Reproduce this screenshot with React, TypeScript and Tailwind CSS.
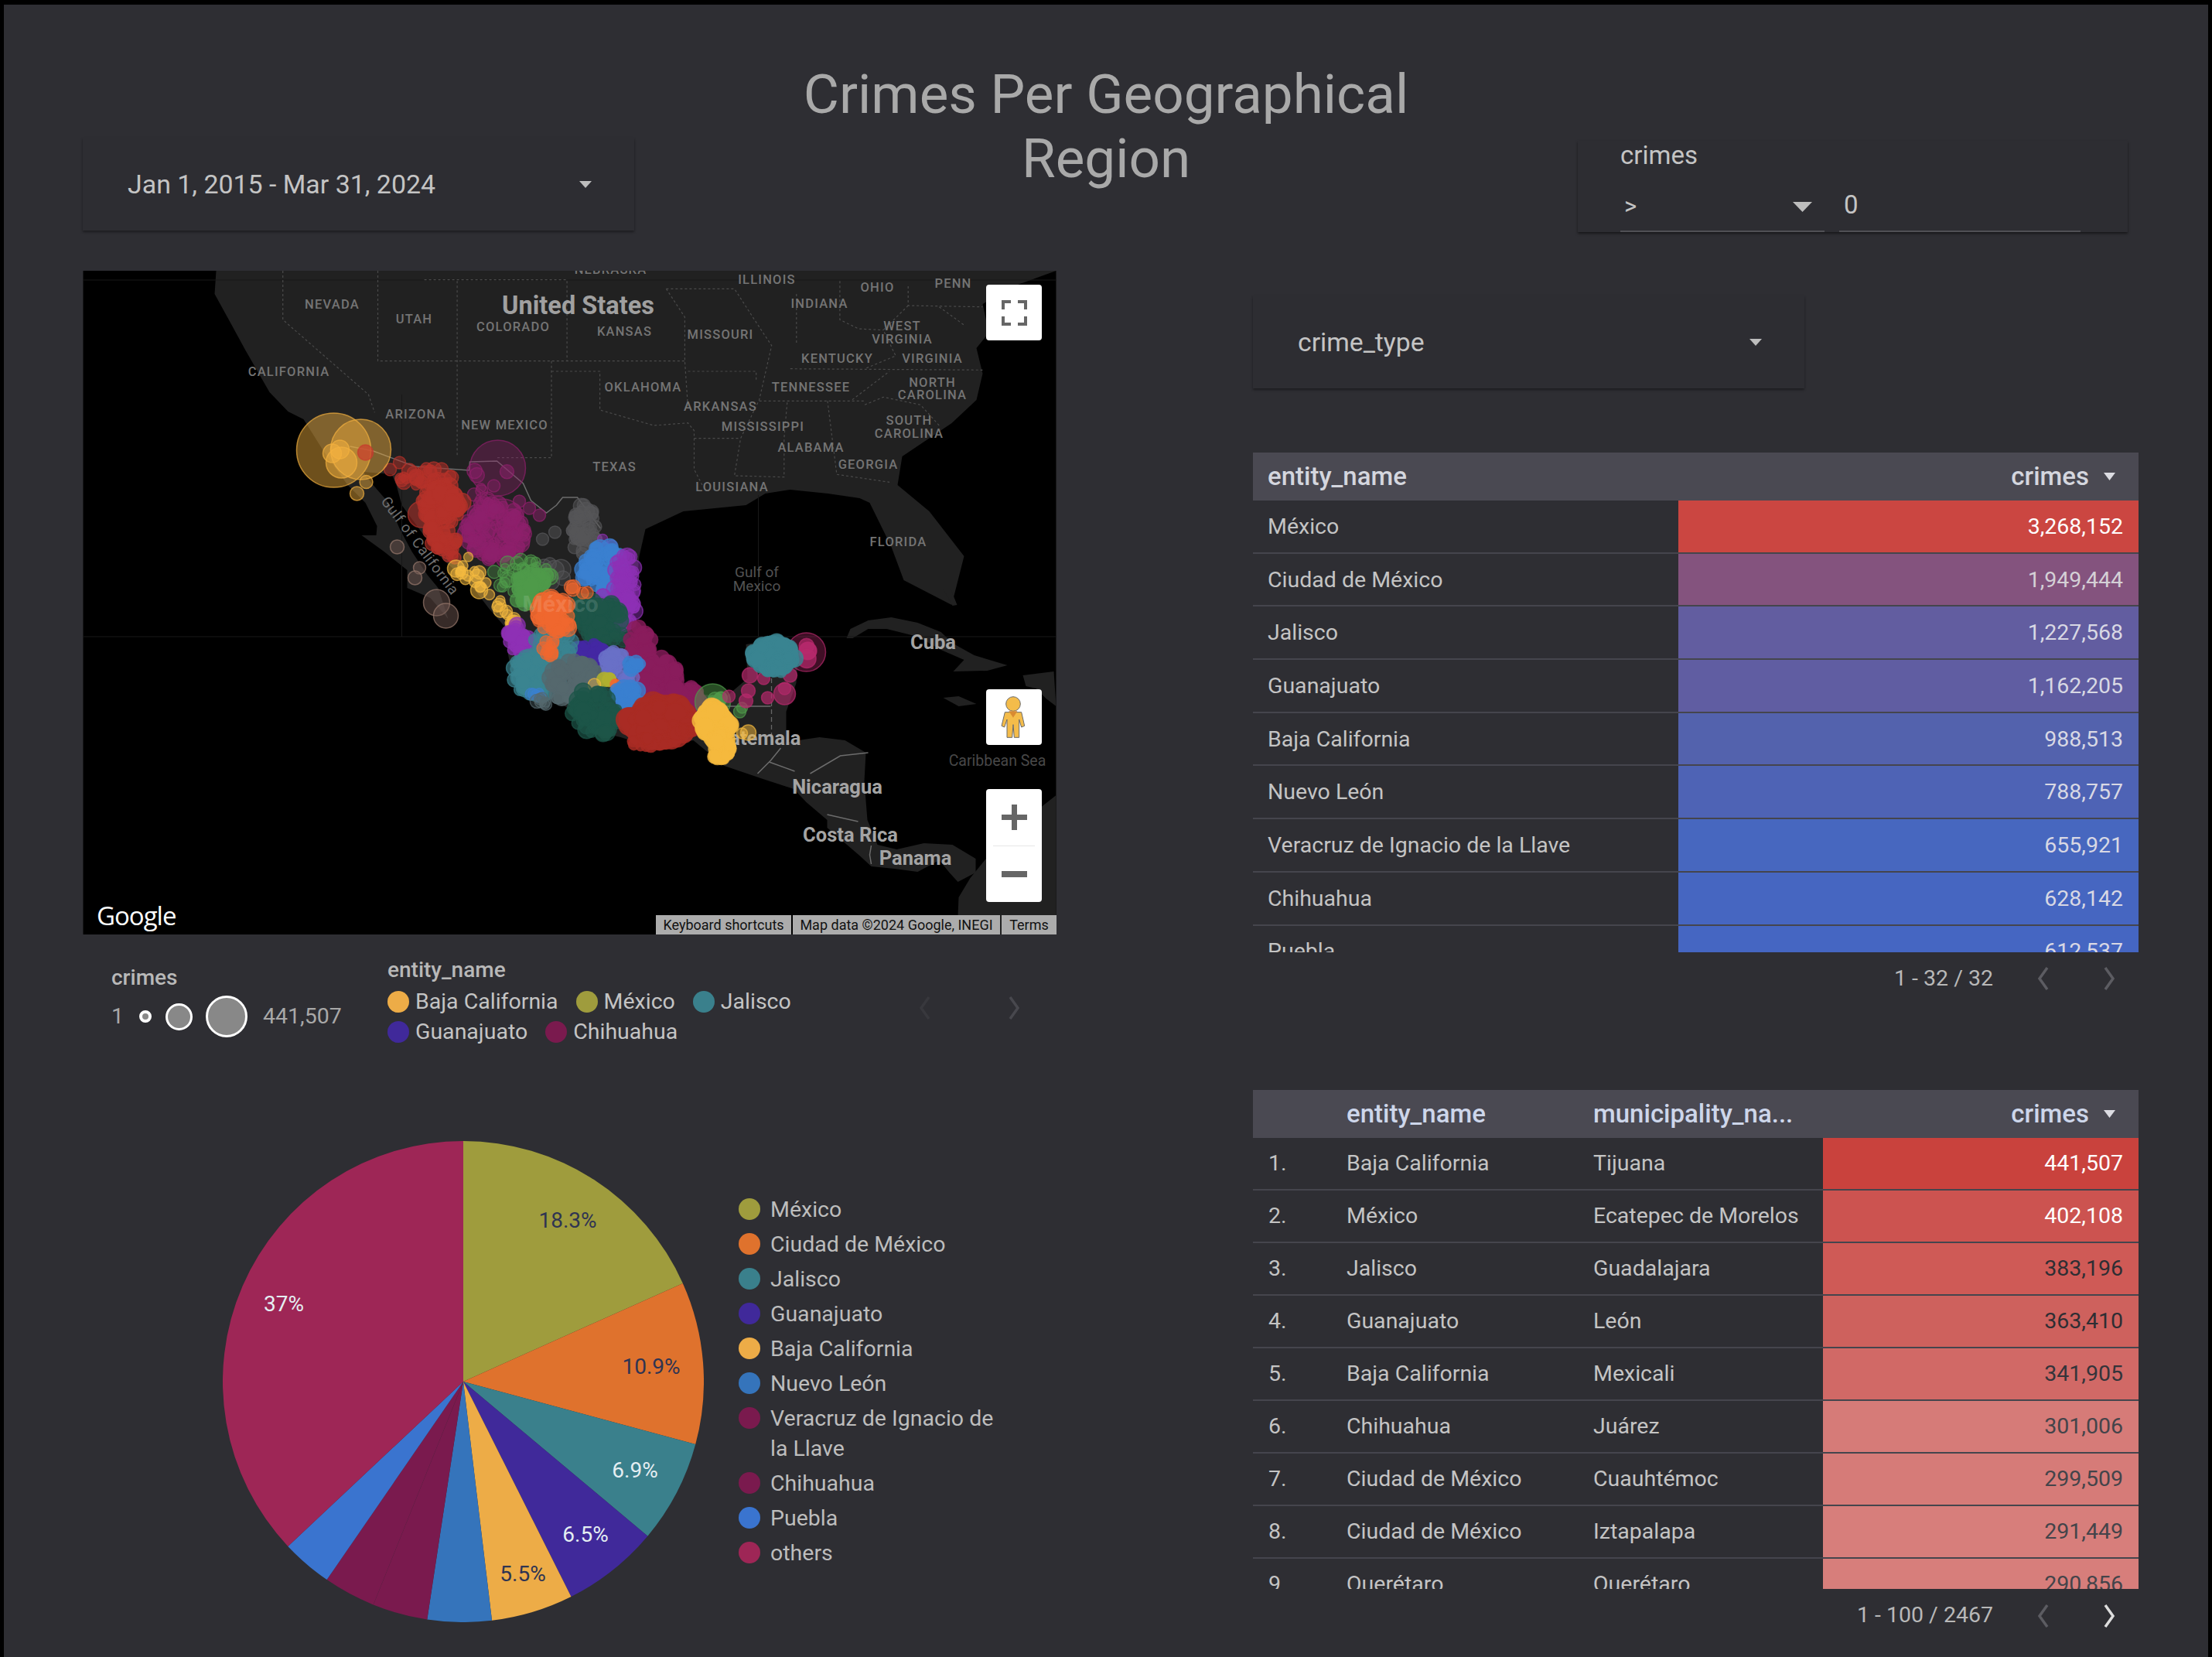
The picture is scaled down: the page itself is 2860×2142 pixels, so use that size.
import React from "react";

const z12 = (p: number[]): string => {
  const o: string[] = [];
  for (let i = 0; i < p.length; i += 2) o.push(`${(108 + 0.802 * p[i]).toFixed(1)},${(350 + p[i + 1] / 3).toFixed(1)}`);
  return o.join(" ");
};
const pts = (p: number[]): string => {
  const o: string[] = [];
  for (let i = 0; i < p.length; i += 2) o.push(`${p[i]},${p[i + 1]}`);
  return o.join(" ");
};

const LAND = [
  280,350, 278,380, 300,420, 318,453, 349,507, 373,532, 393,542, 420,585, 450,627, 473,650, 488,680, 487,692, 468,692, 497,713, 527,737, 527,760, 557,773, 580,800,
  567,760, 553,743, 533,713, 517,683, 503,650, 483,627, 470,610, 507,613, 513,627, 520,653, 547,690, 573,723, 610,757, 633,787, 653,810, 657,843, 660,860, 677,887,
  727,910, 777,947, 803,953, 847,967, 897,957, 937,990, 987,1007, 1027,1020, 1043,1037, 1070,1060, 1070,1070, 1113,1107, 1127,1120, 1157,1123, 1187,1127, 1215,1112, 1228,1128,
  1239,1140, 1262,1128, 1262,1110, 1232,1092, 1195,1090, 1160,1098, 1135,1092, 1122,1060, 1118,1010, 1120,973, 1110,967, 1093,957, 1060,953, 1033,957, 1017,960, 1017,920,
  1030,883, 1033,837, 1000,827, 965,833, 967,877, 940,900, 897,897, 860,877, 837,850, 827,823, 820,793, 827,719, 835,684, 884,661, 965,653, 990,638, 1022,633, 1071,638,
  1112,644, 1125,650, 1153,707, 1169,750, 1231,782, 1247,719, 1202,661, 1161,627, 1167,590, 1231,547, 1263,517, 1271,483, 1263,450, 1279,430, 1271,393, 1311,370, 1366,350,
];
const SOUTH = [1366,1028, 1347,1043, 1310,1056, 1290,1092, 1255,1135, 1240,1160, 1238,1208, 1366,1208];
const CUBA = [1095,825, 1100,813, 1123,802, 1153,798, 1187,805, 1217,817, 1233,832, 1260,847, 1303,860, 1277,867, 1233,868, 1247,853, 1217,840, 1187,823, 1147,813, 1123,813, 1103,825];
const JAMAICA = [1220,902, 1240,900, 1263,910, 1240,913];
const HISP = [1323,873, 1363,868, 1366,913, 1353,903, 1340,890, 1327,887];
const BAHAMA = [1220,762, 1230,762, 1238,782, 1232,783, 1225,770];

const DASHED: number[][] = [
  [322,0,322,190,460,480,470,550],
  [475,0,475,350,970,350],
  [603,40,603,720],
  [550,35,780,35,780,350],
  [755,350,755,725,665,725],
  [755,390,833,390,833,540,920,600,975,590,985,620,985,770,1000,840],
  [940,70,970,180,970,350,975,530],
  [975,390,1085,390,1085,430],
  [940,70,1050,70,1085,200,1110,290,1090,500,1060,650,1050,795,1130,800,1130,650,1135,510],
  [985,650,1060,650],
  [1090,505,1260,505],
  [1200,505,1215,790,1300,820],
  [1140,380,1450,385],
  [1150,90,1150,280],
  [1220,40,1220,190,1250,225,1290,230],
  [1330,60,1330,135,1450,140],
  [1260,520,1290,490,1350,520,1380,600],
  [1330,135,1290,230,1310,330,1260,380],
  [1380,140,1420,210],
  [1240,500,1300,390],
];
const BORDERS: number[][] = [
  [453,577,483,583,537,603,607,608,608,597,643,596,677,625,687,647,707,663,720,653,728,643,747,643,777,683],
  [940,913,997,913],
  [1010,967,997,983,980,1000],
  [995,985,1028,997],
  [1048,1000,1087,977,1123,973],
  [1070,1053,1110,1062],
  [1127,1093,1125,1105,1127,1117],
];

type Cl = { c: string; s?: string; o?: number; e: number[]; ang?: number };
// e: cx, cy, rx, ry, n, rmin, rmax
const CLUSTERS: Cl[] = [
  { c: "#8e1f6b", o: 0.35, e: [644, 605, 0, 0, 1, 36, 36] },
  { c: "#8e1f6b", o: 0.3, e: [650, 673, 0, 0, 1, 28, 28] },
  { c: "#8e1f6b", o: 0.4, e: [618, 608, 8, 8, 2, 8, 10] },
  { c: "#8e1f6b", o: 0.5, e: [656, 612, 4, 4, 1, 9, 9] },
  { c: "#8e1f6b", o: 0.4, e: [644, 628, 6, 4, 1, 8, 8] },
  { c: "#8e1f6b", o: 0.35, e: [620, 645, 16, 20, 9, 6, 10] },
  { c: "#8e1f6b", e: [672, 648, 0, 0, 1, 8, 8] },
  { c: "#8e1f6b", e: [685, 657, 0, 0, 1, 8, 8] },
  { c: "#8e1f6b", e: [698, 666, 0, 0, 1, 8, 8] },
  { c: "#8e1f6b", o: 0.5, e: [642, 688, 42, 36, 95, 6, 12] },
  { c: "#b5322a", o: 0.55, e: [545, 665, 0, 0, 1, 17, 17] },
  { c: "#b5322a", e: [505, 607, 0, 0, 1, 8, 8] },
  { c: "#b5322a", e: [517, 598, 0, 0, 1, 8, 8] },
  { c: "#b5322a", e: [520, 621, 0, 0, 1, 8, 8] },
  { c: "#b5322a", o: 0.55, e: [555, 618, 38, 14, 34, 6, 10] },
  { c: "#b5322a", o: 0.6, e: [572, 652, 26, 26, 60, 7, 12] },
  { c: "#b5322a", o: 0.6, e: [572, 696, 24, 14, 28, 6, 11], ang: 40 },
  { c: "#b5322a", o: 0.55, e: [588, 715, 10, 8, 7, 6, 10] },
  { c: "#f4b93f", e: [590, 735, 0, 0, 1, 11, 11] },
  { c: "#f4b93f", e: [606, 720, 0, 0, 1, 6, 6] },
  { c: "#f4b93f", e: [610, 745, 24, 10, 14, 6, 9], ang: 30 },
  { c: "#f4b93f", e: [620, 763, 0, 0, 1, 11, 11] },
  { c: "#f4b93f", o: 0.45, e: [648, 787, 26, 8, 12, 6, 10], ang: 50 },
  { c: "#555558", o: 0.5, e: [718, 688, 0, 0, 1, 8, 8] },
  { c: "#555558", o: 0.5, e: [702, 697, 0, 0, 1, 8, 8] },
  { c: "#555558", o: 0.5, e: [755, 685, 16, 34, 42, 6, 11] },
  { c: "#555558", o: 0.35, e: [715, 740, 20, 12, 8, 7, 13] },
  { c: "#8e30b5", e: [785, 700, 8, 10, 4, 6, 9] },
  { c: "#3a80d0", o: 0.7, e: [779, 735, 26, 30, 75, 6, 12] },
  { c: "#8e30b5", e: [808, 745, 15, 32, 36, 6, 11] },
  { c: "#8e30b5", e: [798, 785, 26, 28, 55, 6, 11] },
  { c: "#4f9a4a", o: 0.35, e: [672, 745, 42, 22, 38, 6, 11] },
  { c: "#4f9a4a", o: 0.7, e: [688, 762, 24, 24, 30, 7, 12] },
  { c: "#1d5548", o: 0.75, e: [770, 800, 32, 26, 70, 7, 13] },
  { c: "#1d5548", e: [795, 822, 20, 8, 10, 7, 10] },
  { c: "#f0682f", o: 0.5, e: [742, 760, 6, 6, 3, 7, 9] },
  { c: "#f0682f", o: 0.5, e: [757, 767, 4, 3, 2, 7, 8] },
  { c: "#8e30b5", o: 0.7, e: [675, 825, 17, 22, 34, 6, 11] },
  { c: "#4428a3", o: 0.9, e: [762, 845, 20, 13, 25, 6, 10] },
  { c: "#3a8491", o: 0.6, e: [715, 835, 28, 20, 30, 6, 11] },
  { c: "#3a8491", o: 0.65, e: [694, 872, 32, 28, 95, 6, 12] },
  { c: "#3a80d0", e: [690, 899, 12, 5, 6, 6, 8] },
  { c: "#f0682f", o: 0.6, e: [717, 795, 24, 22, 46, 7, 13], ang: 40 },
  { c: "#f0682f", o: 0.6, e: [712, 835, 12, 12, 10, 6, 9] },
  { c: "#55686e", o: 0.75, e: [745, 880, 34, 26, 70, 6, 12] },
  { c: "#55686e", o: 0.4, e: [708, 905, 16, 6, 8, 6, 9] },
  { c: "#8a1d5c", o: 0.8, e: [828, 832, 14, 24, 32, 6, 11] },
  { c: "#8a1d5c", o: 0.8, e: [853, 875, 24, 26, 60, 7, 12] },
  { c: "#8a1d5c", o: 0.8, e: [885, 908, 24, 22, 50, 7, 12] },
  { c: "#6a70c8", o: 0.65, e: [796, 855, 14, 16, 24, 6, 10] },
  { c: "#b0b030", o: 0.9, e: [785, 880, 5, 3, 3, 8, 11] },
  { c: "#f4b93f", o: 0.4, e: [769, 885, 0, 0, 1, 8, 8] },
  { c: "#6a70c8", o: 0.7, e: [812, 875, 10, 8, 10, 6, 9] },
  { c: "#f0682f", o: 0.95, e: [797, 888, 4, 4, 3, 5, 7] },
  { c: "#3a80d0", o: 0.8, e: [820, 860, 10, 6, 10, 6, 10] },
  { c: "#3a80d0", o: 0.8, e: [812, 897, 14, 12, 24, 6, 11] },
  { c: "#1d5548", o: 0.7, e: [770, 920, 32, 26, 75, 6, 12], ang: 30 },
  { c: "#1d5548", e: [782, 945, 10, 4, 2, 9, 11] },
  { c: "#a92c24", o: 0.85, e: [853, 932, 42, 25, 170, 8, 15] },
  { c: "#a92c24", o: 0.85, e: [840, 960, 24, 6, 20, 6, 9] },
  { c: "#a92c24", e: [890, 945, 10, 5, 10, 6, 9] },
  { c: "#4f9a4a", o: 0.5, e: [922, 907, 0, 0, 1, 23, 23] },
  { c: "#4f9a4a", e: [925, 905, 10, 6, 6, 6, 9] },
  { c: "#4f9a4a", e: [957, 920, 0, 0, 1, 8, 8] },
  { c: "#4f9a4a", e: [960, 915, 0, 0, 1, 7, 7] },
  { c: "#f5b93d", o: 0.85, e: [925, 935, 19, 22, 110, 7, 12] },
  { c: "#f5b93d", o: 0.85, e: [932, 965, 11, 19, 65, 6, 10] },
  { c: "#f5b93d", e: [968, 947, 0, 0, 1, 10, 10] },
  { c: "#f5b93d", e: [960, 948, 0, 0, 1, 7, 7] },
  { c: "#b72a6c", o: 0.35, e: [1043, 843, 0, 0, 1, 25, 25] },
  { c: "#b72a6c", o: 0.7, e: [1042, 840, 5, 6, 3, 9, 12] },
  { c: "#b72a6c", o: 0.7, e: [1043, 853, 2, 2, 1, 12, 12] },
  { c: "#b72a6c", o: 0.7, e: [970, 873, 0, 0, 1, 10, 10] },
  { c: "#b72a6c", o: 0.7, e: [968, 893, 0, 0, 1, 9, 9] },
  { c: "#b72a6c", o: 0.7, e: [965, 906, 0, 0, 1, 9, 9] },
  { c: "#b72a6c", o: 0.6, e: [943, 900, 0, 0, 1, 8, 8] },
  { c: "#b72a6c", o: 0.7, e: [988, 877, 0, 0, 1, 8, 8] },
  { c: "#b72a6c", o: 0.7, e: [1022, 873, 0, 0, 1, 9, 9] },
  { c: "#b72a6c", o: 0.7, e: [993, 902, 0, 0, 1, 8, 8] },
  { c: "#b72a6c", o: 0.6, e: [1015, 897, 0, 0, 1, 14, 14] },
  { c: "#b72a6c", o: 0.6, e: [1015, 890, 0, 0, 1, 8, 8] },
  { c: "#3a8491", o: 0.8, e: [1001, 848, 27, 18, 110, 7, 12] },
  { c: "#3a8491", o: 0.8, e: [1002, 865, 12, 6, 15, 6, 8] },
  { c: "#6e5650", s: "#9a7a6e", o: 0.5, e: [514, 707, 0, 0, 1, 9, 9] },
  { c: "#6e5650", s: "#9a7a6e", o: 0.5, e: [543, 734, 0, 0, 1, 8, 8] },
  { c: "#6e5650", s: "#9a7a6e", o: 0.5, e: [537, 747, 0, 0, 1, 9, 9] },
  { c: "#6e5650", s: "#9a7a6e", o: 0.5, e: [565, 779, 0, 0, 1, 17, 17] },
  { c: "#6e5650", s: "#9a7a6e", o: 0.5, e: [577, 796, 0, 0, 1, 16, 16] },
  { c: "#f4b13f", o: 0.45, e: [432, 582, 0, 0, 1, 48, 48] },
  { c: "#f4b13f", o: 0.45, e: [467, 581, 0, 0, 1, 39, 39] },
  { c: "#f4b13f", o: 0.5, e: [442, 598, 0, 0, 1, 20, 20] },
  { c: "#f4b13f", o: 0.5, e: [440, 581, 0, 0, 1, 12, 12] },
  { c: "#f4b13f", o: 0.5, e: [430, 586, 0, 0, 1, 12, 12] },
  { c: "#f4b13f", o: 0.45, e: [474, 623, 0, 0, 1, 8.5, 8.5] },
  { c: "#f4b13f", o: 0.45, e: [462, 638, 0, 0, 1, 9, 9] },
  { c: "#c83a2e", o: 0.7, e: [473, 585, 0, 0, 1, 10, 10] },
];

function mulberry(a: number) {
  return () => {
    a |= 0; a = (a + 0x6d2b79f5) | 0;
    let t = Math.imul(a ^ (a >>> 15), 1 | a);
    t = (t + Math.imul(t ^ (t >>> 7), 61 | t)) ^ t;
    return ((t ^ (t >>> 14)) >>> 0) / 4294967296;
  };
}

const Bubbles = () => {
  const rnd = mulberry(42);
  const out: React.ReactNode[] = [];
  CLUSTERS.forEach((cl, i) => {
    const [cx, cy, rx, ry, n, r0, r1] = cl.e;
    const ang = ((cl.ang ?? 0) * Math.PI) / 180;
    for (let k = 0; k < n; k++) {
      const th = rnd() * Math.PI * 2;
      const d = Math.sqrt(rnd());
      const ex = Math.cos(th) * d * rx;
      const ey = Math.sin(th) * d * ry;
      const x = cx + ex * Math.cos(ang) - ey * Math.sin(ang);
      const y = cy + ex * Math.sin(ang) + ey * Math.cos(ang);
      const r = r0 + rnd() * (r1 - r0);
      out.push(
        <circle key={`${i}-${k}`} cx={x} cy={y} r={r} fill={cl.c} fillOpacity={cl.o ?? 0.5} stroke={cl.s ?? cl.c} strokeOpacity={0.7} strokeWidth={1.5} />
      );
    }
  });
  return <g>{out}</g>;
};

const STATES: [string, number, number][] = [
  ["NEBRASKA", 790, 354], ["NEVADA", 430, 399], ["UTAH", 536, 418], ["COLORADO", 664, 428], ["KANSAS", 808, 434], ["MISSOURI", 932, 438], ["ILLINOIS", 992, 367],
  ["INDIANA", 1060, 398], ["OHIO", 1135, 377], ["PENN", 1233, 372], ["WEST", 1167, 427], ["VIRGINIA", 1167, 444], ["KENTUCKY", 1083, 469], ["VIRGINIA", 1206, 469],
  ["CALIFORNIA", 374, 486], ["OKLAHOMA", 832, 506], ["TENNESSEE", 1049, 506], ["NORTH", 1206, 500], ["CAROLINA", 1206, 516], ["ARKANSAS", 932, 531], ["ARIZONA", 538, 541],
  ["NEW MEXICO", 653, 555], ["MISSISSIPPI", 987, 557], ["SOUTH", 1176, 549], ["CAROLINA", 1176, 566], ["ALABAMA", 1049, 584], ["GEORGIA", 1123, 606], ["TEXAS", 795, 609],
  ["LOUISIANA", 947, 635], ["FLORIDA", 1162, 706],
];
const COUNTRY: [string, number, number][] = [["Cuba", 1207, 839], ["Nicaragua", 1083, 1026], ["Costa Rica", 1100, 1088], ["Panama", 1184, 1118]];

const MapArt = () => (
  <svg viewBox="108 350 1258 858" className="block h-full w-full [font-family:Roboto,sans-serif]">
    <rect x="108" y="350" width="1258" height="858" fill="#000" />
    <polygon points={pts(LAND)} fill="#212121" />
    <polygon points={pts(SOUTH)} fill="#212121" />
    <polygon points={pts(CUBA)} fill="#212121" />
    <polygon points={pts(JAMAICA)} fill="#212121" />
    <polygon points={pts(HISP)} fill="#212121" />
    <polygon points={pts(BAHAMA)} fill="#212121" />
    <line x1="108" y1="823" x2="1366" y2="823" stroke="#181818" strokeWidth="1" />
    <line x1="520" y1="510" x2="520" y2="823" stroke="#181818" strokeWidth="1" />
    <line x1="981" y1="640" x2="981" y2="823" stroke="#181818" strokeWidth="1" />
    <line x1="108" y1="362" x2="1366" y2="362" stroke="#181818" strokeWidth="1" />
    {DASHED.map((d, i) => (
      <polyline key={i} points={z12(d)} fill="none" stroke="#4a4a4a" strokeWidth="1.2" strokeDasharray="3 3" />
    ))}
    <polyline points="998,877 998,950" fill="none" stroke="#666" strokeWidth="1.3" strokeDasharray="6 4" />
    {BORDERS.map((d, i) => (
      <polyline key={i} points={pts(d)} fill="none" stroke="#6c6c6c" strokeWidth="1.5" />
    ))}
    {STATES.map(([t, x, y], i) => (
      <text key={i} x={x} y={y} textAnchor="middle" fontSize="16.5" fontWeight="500" letterSpacing="1.2" fill="#747474">{t}</text>
    ))}
    <text x="748" y="406" textAnchor="middle" fontSize="32.5" fontWeight="700" fill="#a0a0a0">United States</text>
    <text x="979" y="746" textAnchor="middle" fontSize="19" fill="#525252">Gulf of</text>
    <text x="979" y="764" textAnchor="middle" fontSize="19" fill="#525252">Mexico</text>
    <text x="1290" y="990" textAnchor="middle" fontSize="19.5" fill="#484848">Caribbean Sea</text>
    <text x="544" y="712" textAnchor="middle" fontSize="19" fill="#6e6e6e" letterSpacing="0.6" transform="rotate(53 544 705)">Gulf of California</text>
    {COUNTRY.map(([t, x, y], i) => (
      <text key={i} x={x} y={y} textAnchor="middle" fontSize="25.5" fontWeight="700" fill="#a4a4a4">{t}</text>
    ))}
    <text x="1036" y="963" textAnchor="end" fontSize="25.5" fontWeight="700" fill="#a4a4a4">Guatemala</text>
    <Bubbles />
    <text x="676" y="791" fontSize="30" fontWeight="700" fill="#fff" fillOpacity="0.14">México</text>
  </svg>
);

const Tri = ({ w = 16, h = 9, c = "#bdbdbd" }: { w?: number; h?: number; c?: string }) => (
  <svg width={w} height={h} viewBox="0 0 16 9" preserveAspectRatio="none" className="block shrink-0">
    <polygon points="0,0 16,0 8,9" fill={c} />
  </svg>
);

const Chev = ({ dir, c }: { dir: "l" | "r"; c: string }) => (
  <svg width="16" height="32" viewBox="0 0 16 32" className="block shrink-0">
    <polyline points={dir === "l" ? "13,2 3,16 13,30" : "3,2 13,16 3,30"} fill="none" stroke={c} strokeWidth="3.5" />
  </svg>
);

const T1 = [
  ["México", "3,268,152", "#cb4641", "#ffffff"],
  ["Ciudad de México", "1,949,444", "#84537e", "#d4d0d6"],
  ["Jalisco", "1,227,568", "#625da0", "#d8d8e4"],
  ["Guanajuato", "1,162,205", "#605da2", "#d8d8e4"],
  ["Baja California", "988,513", "#5362ad", "#d8d8e4"],
  ["Nuevo León", "788,757", "#4e63b5", "#d8d8e4"],
  ["Veracruz de Ignacio de la Llave", "655,921", "#4767bf", "#d8d8e4"],
  ["Chihuahua", "628,142", "#4666c1", "#d8d8e4"],
  ["Puebla", "612,537", "#4566c2", "#d8d8e4"],
];
const T2 = [
  ["1.", "Baja California", "Tijuana", "441,507", "#c9423d", "#ffffff"],
  ["2.", "México", "Ecatepec de Morelos", "402,108", "#cc5350", "#ffffff"],
  ["3.", "Jalisco", "Guadalajara", "383,196", "#cf5a56", "#2e2e33"],
  ["4.", "Guanajuato", "León", "363,410", "#ce615d", "#2e2e33"],
  ["5.", "Baja California", "Mexicali", "341,905", "#d16966", "#34343a"],
  ["6.", "Chihuahua", "Juárez", "301,006", "#d67b78", "#44444a"],
  ["7.", "Ciudad de México", "Cuauhtémoc", "299,509", "#d67b78", "#44444a"],
  ["8.", "Ciudad de México", "Iztapalapa", "291,449", "#d77e7b", "#44444a"],
  ["9.", "Querétaro", "Querétaro", "290,856", "#d77e7b", "#44444a"],
];

const PIE: [number, string][] = [
  [18.3, "#9f9c3d"], [10.9, "#df722d"], [6.9, "#3a808c"], [6.5, "#40299a"], [5.5, "#edac47"], [4.3, "#3574bb"], [3.7, "#7a1a4e"], [3.5, "#7a1a4e"], [3.4, "#3a74cf"], [37, "#9e2656"],
];
const PIE_LBL: [string, number, number, string][] = [
  ["18.3%", 446, 113, "#2f3452"], ["10.9%", 554, 302, "#2f3452"], ["6.9%", 533, 436, "#e4eef2"], ["6.5%", 469, 519, "#e4eef2"], ["5.5%", 388, 570, "#2f3452"], ["37%", 79, 221, "#e4eef2"],
];

const Pie = () => {
  const r = 311;
  let a = 0;
  return (
    <svg width="622" height="622" viewBox="0 0 622 622" className="block shrink-0 [font-family:Roboto,sans-serif]">
      {PIE.map(([v, c], i) => {
        const a0 = a;
        a += (v / 100) * Math.PI * 2;
        const x0 = 311 + r * Math.sin(a0), y0 = 311 - r * Math.cos(a0);
        const x1 = 311 + r * Math.sin(a), y1 = 311 - r * Math.cos(a);
        return <path key={i} d={`M311 311L${x0} ${y0}A${r} ${r} 0 ${v > 50 ? 1 : 0} 1 ${x1} ${y1}Z`} fill={c} />;
      })}
      {PIE_LBL.map(([t, x, y, c]) => (
        <text key={t} x={x} y={y} dy="-1" textAnchor="middle" fontSize="28" fill={c}>{t}</text>
      ))}
    </svg>
  );
};

const Dot = ({ c }: { c: string }) => <span className="block h-[28px] w-[28px] shrink-0 rounded-full" style={{ backgroundColor: c }} />;

const LegendItem = ({ c, t }: { c: string; t: string }) => (
  <span className="flex items-center gap-[8px]">
    <Dot c={c} />
    <span>{t}</span>
  </span>
);

const PieRow = ({ c, t, t2 }: { c: string; t: string; t2?: string }) => (
  <div className="flex gap-[13px]">
    <span className="mt-[8px] block"><Dot c={c} /></span>
    <div className="leading-[45px]">
      <div>{t}</div>
      {t2 && <div className="-mt-[6px]">{t2}</div>}
    </div>
  </div>
);

const Pager = ({ text, right, off }: { text: string; right: string; off: string }) => (
  <div className={`flex h-[66px] items-center justify-end text-[28.5px] text-[#b8b8b8] ${off}`}>
    <span>{text}</span>
    <span className="ml-[57px]"><Chev dir="l" c="#5c5c62" /></span>
    <span className="ml-[69px] mr-[30px]"><Chev dir="r" c={right} /></span>
  </div>
);

export default function App() {
  return (
    <div className="h-[2142px] w-[2860px] overflow-hidden bg-black px-[5px] pt-[6px] [font-family:Roboto,sans-serif]">
      <div className="h-full w-full bg-[#2e2e33] pl-[102px] text-[28.5px] text-[#c4c4c4]">
        {/* header */}
        <div className="flex h-[344px] items-start">
          <div className="mt-[172px] flex h-[120px] w-[713px] shrink-0 items-center justify-between bg-[#2d2d32] pl-[58px] pr-[55px] text-[33.9px] shadow-[0_2px_3px_rgba(0,0,0,0.4)]">
            <span className="pt-[2px]">Jan 1, 2015 - Mar 31, 2024</span>
            <Tri />
          </div>
          <div className="mt-[74px] ml-[200px] w-[820px] shrink-0 text-center text-[71px] leading-[83px] text-[#a9a9a9]">
            Crimes Per Geographical Region
          </div>
          <div className="mt-[176px] ml-[200px] h-[118px] w-[711px] shrink-0 bg-[#2d2d32] pl-[55px] pr-[61px] shadow-[0_2px_3px_rgba(0,0,0,0.5)]">
            <div className="pt-[1px] text-[33px] leading-[36px]">crimes</div>
            <div className="mt-[27px] flex gap-[19px]">
              <div className="flex h-[54px] w-[264px] items-center justify-between border-b-2 border-[#505055] pb-[10px] pl-[5px] pr-[16px] text-[31px]">
                <span>&gt;</span>
                <Tri w={25} h={13} />
              </div>
              <div className="flex h-[54px] flex-1 items-center border-b-2 border-[#505055] pb-[14px] pl-[6px] text-[33px]">0</div>
            </div>
          </div>
        </div>

        <div className="flex">
          {/* left */}
          <div className="w-[1259px] shrink-0">
            <div className="relative h-[858px] w-[1259px] overflow-hidden">
              <MapArt />
              <div className="absolute left-[18px] top-[816px] text-[33px] font-medium leading-[36px] tracking-[-1px] text-white [font-family:'Open_Sans',sans-serif]">Google</div>
              <div className="absolute bottom-0 right-0 flex h-[25px] gap-[2px] text-[18px] leading-[25px] text-[#111]">
                <span className="w-[175px] bg-[#acacac] text-center">Keyboard shortcuts</span>
                <span className="w-[268px] bg-[#acacac] text-center">Map data ©2024 Google, INEGI</span>
                <span className="w-[71px] bg-[#acacac] text-center">Terms</span>
              </div>
              <div className="absolute left-[1168px] top-[18px] flex h-[72px] w-[72px] items-center justify-center rounded-[4px] bg-white">
                <svg width="33" height="33" viewBox="0 0 33 33">
                  <path d="M2 12V2H12M21 2H31V12M2 21V31H12M21 31H31V21" fill="none" stroke="#666" strokeWidth="4" />
                </svg>
              </div>
              <div className="absolute left-[1168px] top-[541px] h-[72px] w-[72px] rounded-[4px] bg-white">
                <svg width="72" height="72" viewBox="77 33 216 216">
                  <path d="M150 122L214 122L226 175L214 180L205 150L205 220L186 220L182 170L178 220L158 220L158 150L148 180L137 175Z" fill="#f4bc4a" stroke="#6b6b6b" strokeWidth="3" />
                  <circle cx="182" cy="90" r="28" fill="#f4bc4a" stroke="#6b6b6b" strokeWidth="3" />
                  <polygon points="165,118 198,118 182,143" fill="#d98a30" />
                </svg>
              </div>
              <div className="absolute left-[1168px] top-[670px] flex h-[146px] w-[72px] flex-col items-center rounded-[4px] bg-white">
                <div className="flex h-[73px] items-center justify-center">
                  <svg width="33" height="33" viewBox="0 0 33 33"><path d="M13 0H20V13H33V20H20V33H13V20H0V13H13Z" fill="#666" /></svg>
                </div>
                <div className="h-[1.5px] w-[54px] bg-[#e6e6e6]" />
                <div className="flex h-[72px] items-center justify-center">
                  <svg width="33" height="8" viewBox="0 0 33 8"><rect width="33" height="8" fill="#666" /></svg>
                </div>
              </div>
            </div>

            {/* legend */}
            <div className="flex h-[267px] items-start">
              <div className="ml-[37px] mt-[37px] w-[357px] shrink-0">
                <div className="text-[28px] font-medium leading-[38px] text-[#b8b8b8]">crimes</div>
                <div className="mt-[4px] flex items-center text-[#a8a8a8]">
                  <span className="w-[31px]">1</span>
                  <span className="ml-[5px] h-[16px] w-[16px] rounded-full border-[4px] border-white bg-[#888]" />
                  <span className="ml-[18px] h-[35px] w-[35px] rounded-full border-[3px] border-white bg-[#888]" />
                  <span className="ml-[17px] h-[54px] w-[54px] rounded-full border-[3px] border-white bg-[#888]" />
                  <span className="ml-[20px]">441,507</span>
                </div>
              </div>
              <div className="mt-[27px] w-[640px] shrink-0">
                <div className="text-[28px] font-medium leading-[38px] text-[#b8b8b8]">entity_name</div>
                <div className="mt-[3px] flex gap-x-[23px] leading-[38px]">
                  <LegendItem c="#edac47" t="Baja California" />
                  <LegendItem c="#9f9c3d" t="México" />
                  <LegendItem c="#3a808c" t="Jalisco" />
                </div>
                <div className="mt-[1px] flex gap-x-[23px] leading-[38px]">
                  <LegendItem c="#40299a" t="Guanajuato" />
                  <LegendItem c="#7a1a4e" t="Chihuahua" />
                </div>
              </div>
              <div className="ml-[47px] mt-[79px] flex gap-[99px]">
                <Chev dir="l" c="#38383d" />
                <Chev dir="r" c="#48484e" />
              </div>
            </div>

            {/* pie */}
            <div className="flex items-start pl-[181px]">
              <Pie />
              <div className="ml-[45px] mt-[66px] w-[360px] text-[#bdbdbd]">
                <PieRow c="#9f9c3d" t="México" />
                <PieRow c="#df722d" t="Ciudad de México" />
                <PieRow c="#3a808c" t="Jalisco" />
                <PieRow c="#40299a" t="Guanajuato" />
                <PieRow c="#edac47" t="Baja California" />
                <PieRow c="#3574bb" t="Nuevo León" />
                <PieRow c="#7a1a4e" t="Veracruz de Ignacio de" t2="la Llave" />
                <PieRow c="#7a1a4e" t="Chihuahua" />
                <PieRow c="#3a74cf" t="Puebla" />
                <PieRow c="#9e2656" t="others" />
              </div>
            </div>
          </div>

          {/* right */}
          <div className="ml-[254px] w-[1145px] shrink-0 pt-[32px]">
            <div className="flex h-[120px] w-[713px] items-center justify-between bg-[#2d2d32] pl-[58px] pr-[55px] text-[33.7px] shadow-[0_2px_3px_rgba(0,0,0,0.4)]">
              <span className="pt-[2px]">crime_type</span>
              <Tri />
            </div>

            <div className="mt-[83px] h-[646px] overflow-hidden">
              <div className="flex h-[62px] items-center justify-between bg-[#4a4952] pl-[19px] pr-[30px] text-[33px] font-medium text-[#d4d6de]">
                <span>entity_name</span>
                <span className="flex items-center gap-[19px]">crimes<Tri w={15} h={10} c="#dcdce2" /></span>
              </div>
              {T1.map(([n, v, c, tc]) => (
                <div key={n} className="grid h-[68.7px] grid-cols-[550px_595px] border-b-2 border-[#45454d]">
                  <div className="flex items-center pl-[19px] pt-[2px]">{n}</div>
                  <div className="flex items-center justify-end pr-[20px] pt-[2px]" style={{ backgroundColor: c, color: tc }}>{v}</div>
                </div>
              ))}
            </div>
            <Pager text="1 - 32 / 32" right="#5c5c62" off="pt-[2px]" />

            <div className="mt-[112px] h-[645px] overflow-hidden">
              <div className="grid h-[62px] grid-cols-[121px_319px_297px_408px] items-center bg-[#4a4952] text-[33px] font-medium text-[#cdd6ea]">
                <span />
                <span>entity_name</span>
                <span className="whitespace-nowrap">municipality_na...</span>
                <span className="flex items-center justify-end gap-[19px] pr-[30px]">crimes<Tri w={15} h={10} c="#dcdce2" /></span>
              </div>
              {T2.map(([r, e, m, v, c, tc]) => (
                <div key={r} className="grid h-[68px] grid-cols-[121px_319px_297px_408px] border-b-2 border-[#45454d]">
                  <div className="flex items-center pl-[20px]">{r}</div>
                  <div className="flex items-center">{e}</div>
                  <div className="flex items-center whitespace-nowrap">{m}</div>
                  <div className="flex items-center justify-end pr-[20px]" style={{ backgroundColor: c, color: tc }}>{v}</div>
                </div>
              ))}
            </div>
            <Pager text="1 - 100 / 2467" right="#dddddd" off="pt-[3px]" />
          </div>
        </div>
      </div>
    </div>
  );
}
